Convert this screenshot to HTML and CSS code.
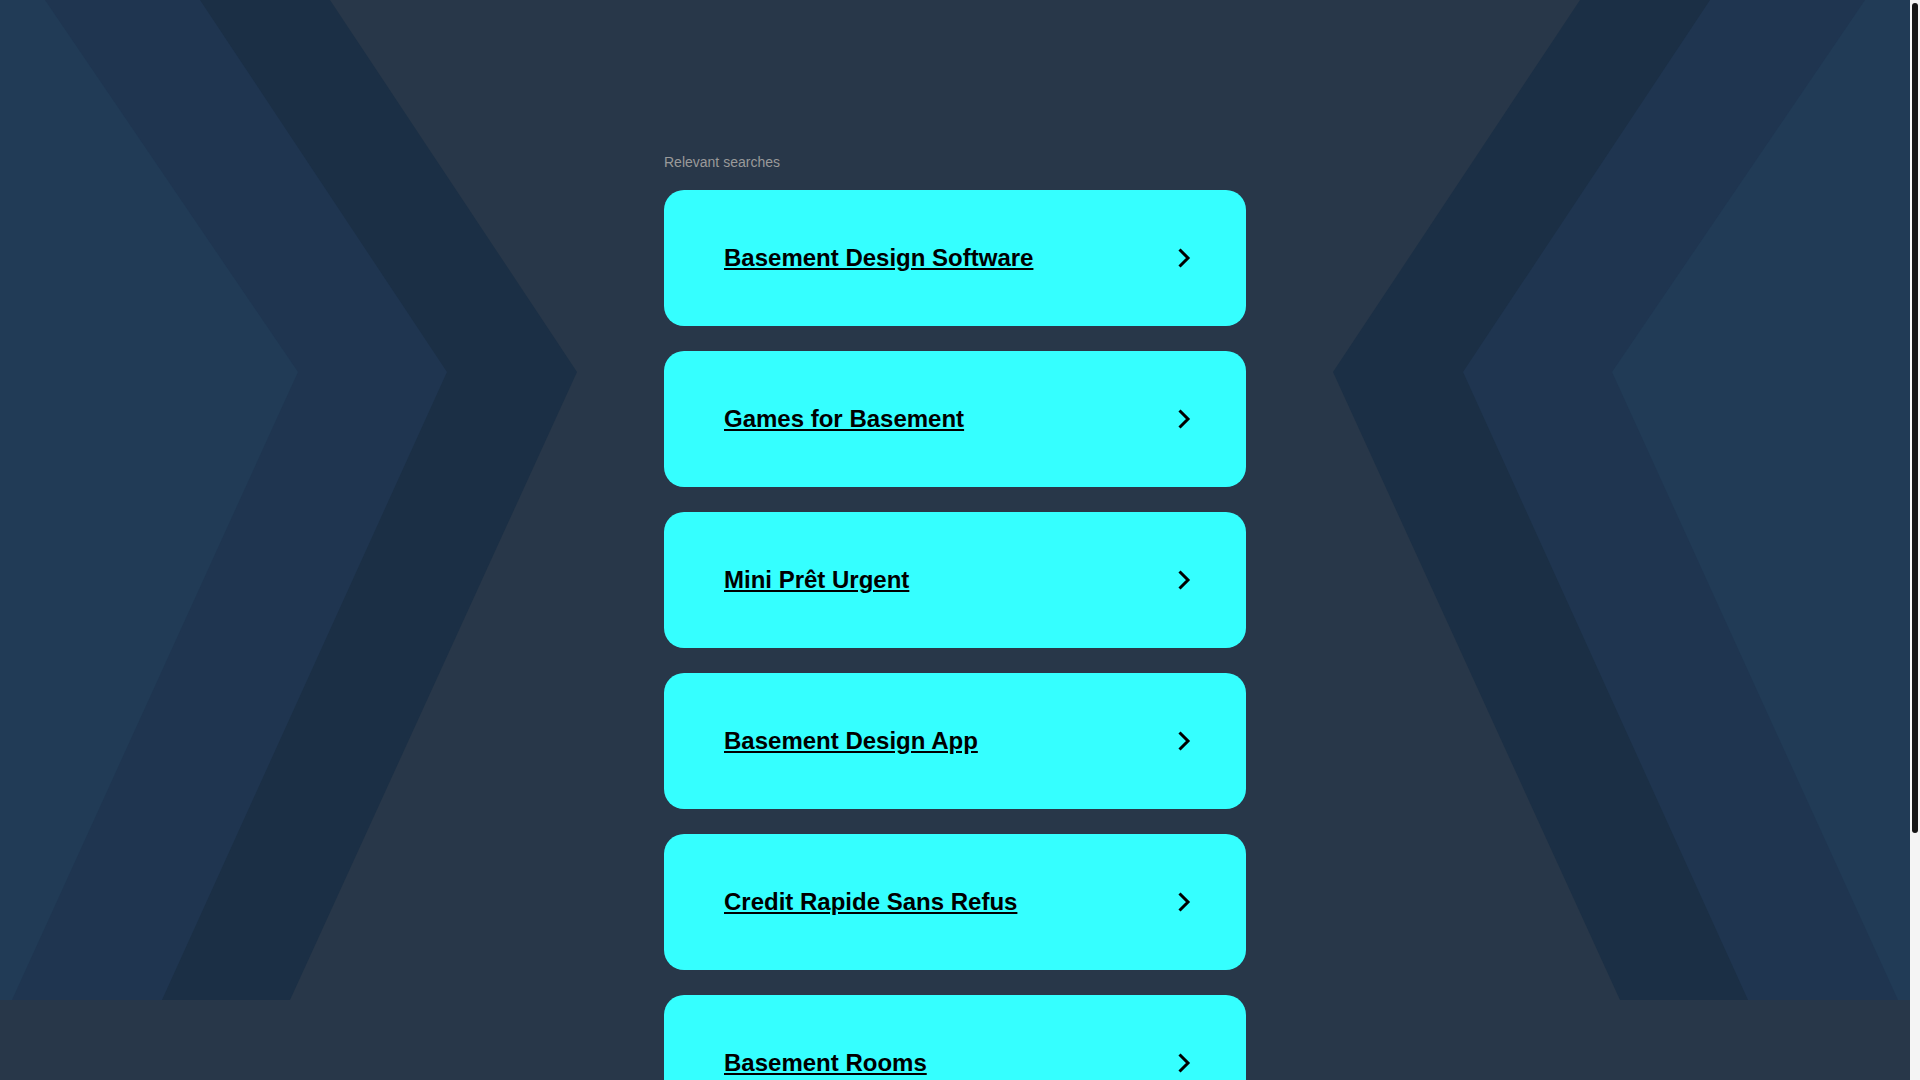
FILE: index.html
```html
<!DOCTYPE html>
<html lang="en">
<head>
<meta charset="utf-8">
<title>Relevant searches</title>
<link rel="stylesheet" href="styles.css">
</head>
<body>
<div class="page">
  <div class="bg" aria-hidden="true">
    <svg class="bg-art" width="1910" height="1000" viewBox="0 0 1910 1000">
      <polygon fill="#1b2f45" points="0,0 330,0 577,372 290,1000 0,1000"/>
      <polygon fill="#1f3550" points="0,0 200,0 447,372 162,1000 0,1000"/>
      <polygon fill="#213b56" points="0,0 45,0 298,372 12,1000 0,1000"/>
      <polygon fill="#1b2f45" points="1910,0 1580,0 1333,372 1620,1000 1910,1000"/>
      <polygon fill="#1f3550" points="1910,0 1710,0 1463,372 1748,1000 1910,1000"/>
      <polygon fill="#213b56" points="1910,0 1865,0 1612,372 1898,1000 1910,1000"/>
    </svg>
  </div>
  <main class="wrap">
    <div class="label">Relevant searches</div>
    <ul class="list">
      <li><a class="card" href="#"><span class="card-text">Basement Design Software</span><svg class="chev" width="14" height="22" viewBox="0 0 14 22"><polyline points="2.5,2.5 11,11 2.5,19.5" fill="none" stroke="#000" stroke-width="3"/></svg></a></li>
      <li><a class="card" href="#"><span class="card-text">Games for Basement</span><svg class="chev" width="14" height="22" viewBox="0 0 14 22"><polyline points="2.5,2.5 11,11 2.5,19.5" fill="none" stroke="#000" stroke-width="3"/></svg></a></li>
      <li><a class="card" href="#"><span class="card-text">Mini Prêt Urgent</span><svg class="chev" width="14" height="22" viewBox="0 0 14 22"><polyline points="2.5,2.5 11,11 2.5,19.5" fill="none" stroke="#000" stroke-width="3"/></svg></a></li>
      <li><a class="card" href="#"><span class="card-text">Basement Design App</span><svg class="chev" width="14" height="22" viewBox="0 0 14 22"><polyline points="2.5,2.5 11,11 2.5,19.5" fill="none" stroke="#000" stroke-width="3"/></svg></a></li>
      <li><a class="card" href="#"><span class="card-text">Credit Rapide Sans Refus</span><svg class="chev" width="14" height="22" viewBox="0 0 14 22"><polyline points="2.5,2.5 11,11 2.5,19.5" fill="none" stroke="#000" stroke-width="3"/></svg></a></li>
      <li><a class="card" href="#"><span class="card-text">Basement Rooms</span><svg class="chev" width="14" height="22" viewBox="0 0 14 22"><polyline points="2.5,2.5 11,11 2.5,19.5" fill="none" stroke="#000" stroke-width="3"/></svg></a></li>
    </ul>
  </main>
</div>
<div class="scrollbar" aria-hidden="true"><div class="thumb"></div></div>
</body>
</html>
```

FILE: styles.css
```css
html, body {
  margin: 0;
  padding: 0;
}

body {
  background: #283749;
  font-family: "Liberation Sans", Arial, sans-serif;
}

.page {
  position: relative;
  margin-right: 10px;
  min-height: 1400px;
}

.bg {
  position: absolute;
  top: 0;
  left: 0;
  width: 100%;
  height: 1000px;
  overflow: hidden;
  z-index: 0;
}

.bg-art {
  position: absolute;
  top: 0;
  left: 50%;
  transform: translateX(-50%);
  display: block;
}

.wrap {
  position: relative;
  z-index: 1;
  width: 582px;
  margin: 0 auto;
  padding-top: 154px;
  padding-bottom: 260px;
}

.label {
  color: #9a9a9a;
  font-size: 14px;
  line-height: 16px;
  margin-bottom: 20px;
}

.list {
  list-style: none;
  margin: 0;
  padding: 0;
  display: flex;
  flex-direction: column;
  gap: 25px;
}

.card {
  display: flex;
  align-items: center;
  justify-content: space-between;
  height: 136px;
  box-sizing: border-box;
  padding: 0 55px 0 60px;
  background: #35ffff;
  border-radius: 20px;
  color: #000;
  text-decoration: none;
}

.card-text {
  font-size: 24px;
  font-weight: bold;
  line-height: 28px;
  text-decoration: underline;
}

.chev {
  display: block;
  flex: none;
}

.scrollbar {
  position: fixed;
  top: 0;
  right: 0;
  width: 10px;
  height: 100%;
  background: #f4f4f4;
  z-index: 5;
}

.thumb {
  margin: 3px 2px 0 2px;
  height: 830px;
  background: #141414;
  border-radius: 3px;
}
```
